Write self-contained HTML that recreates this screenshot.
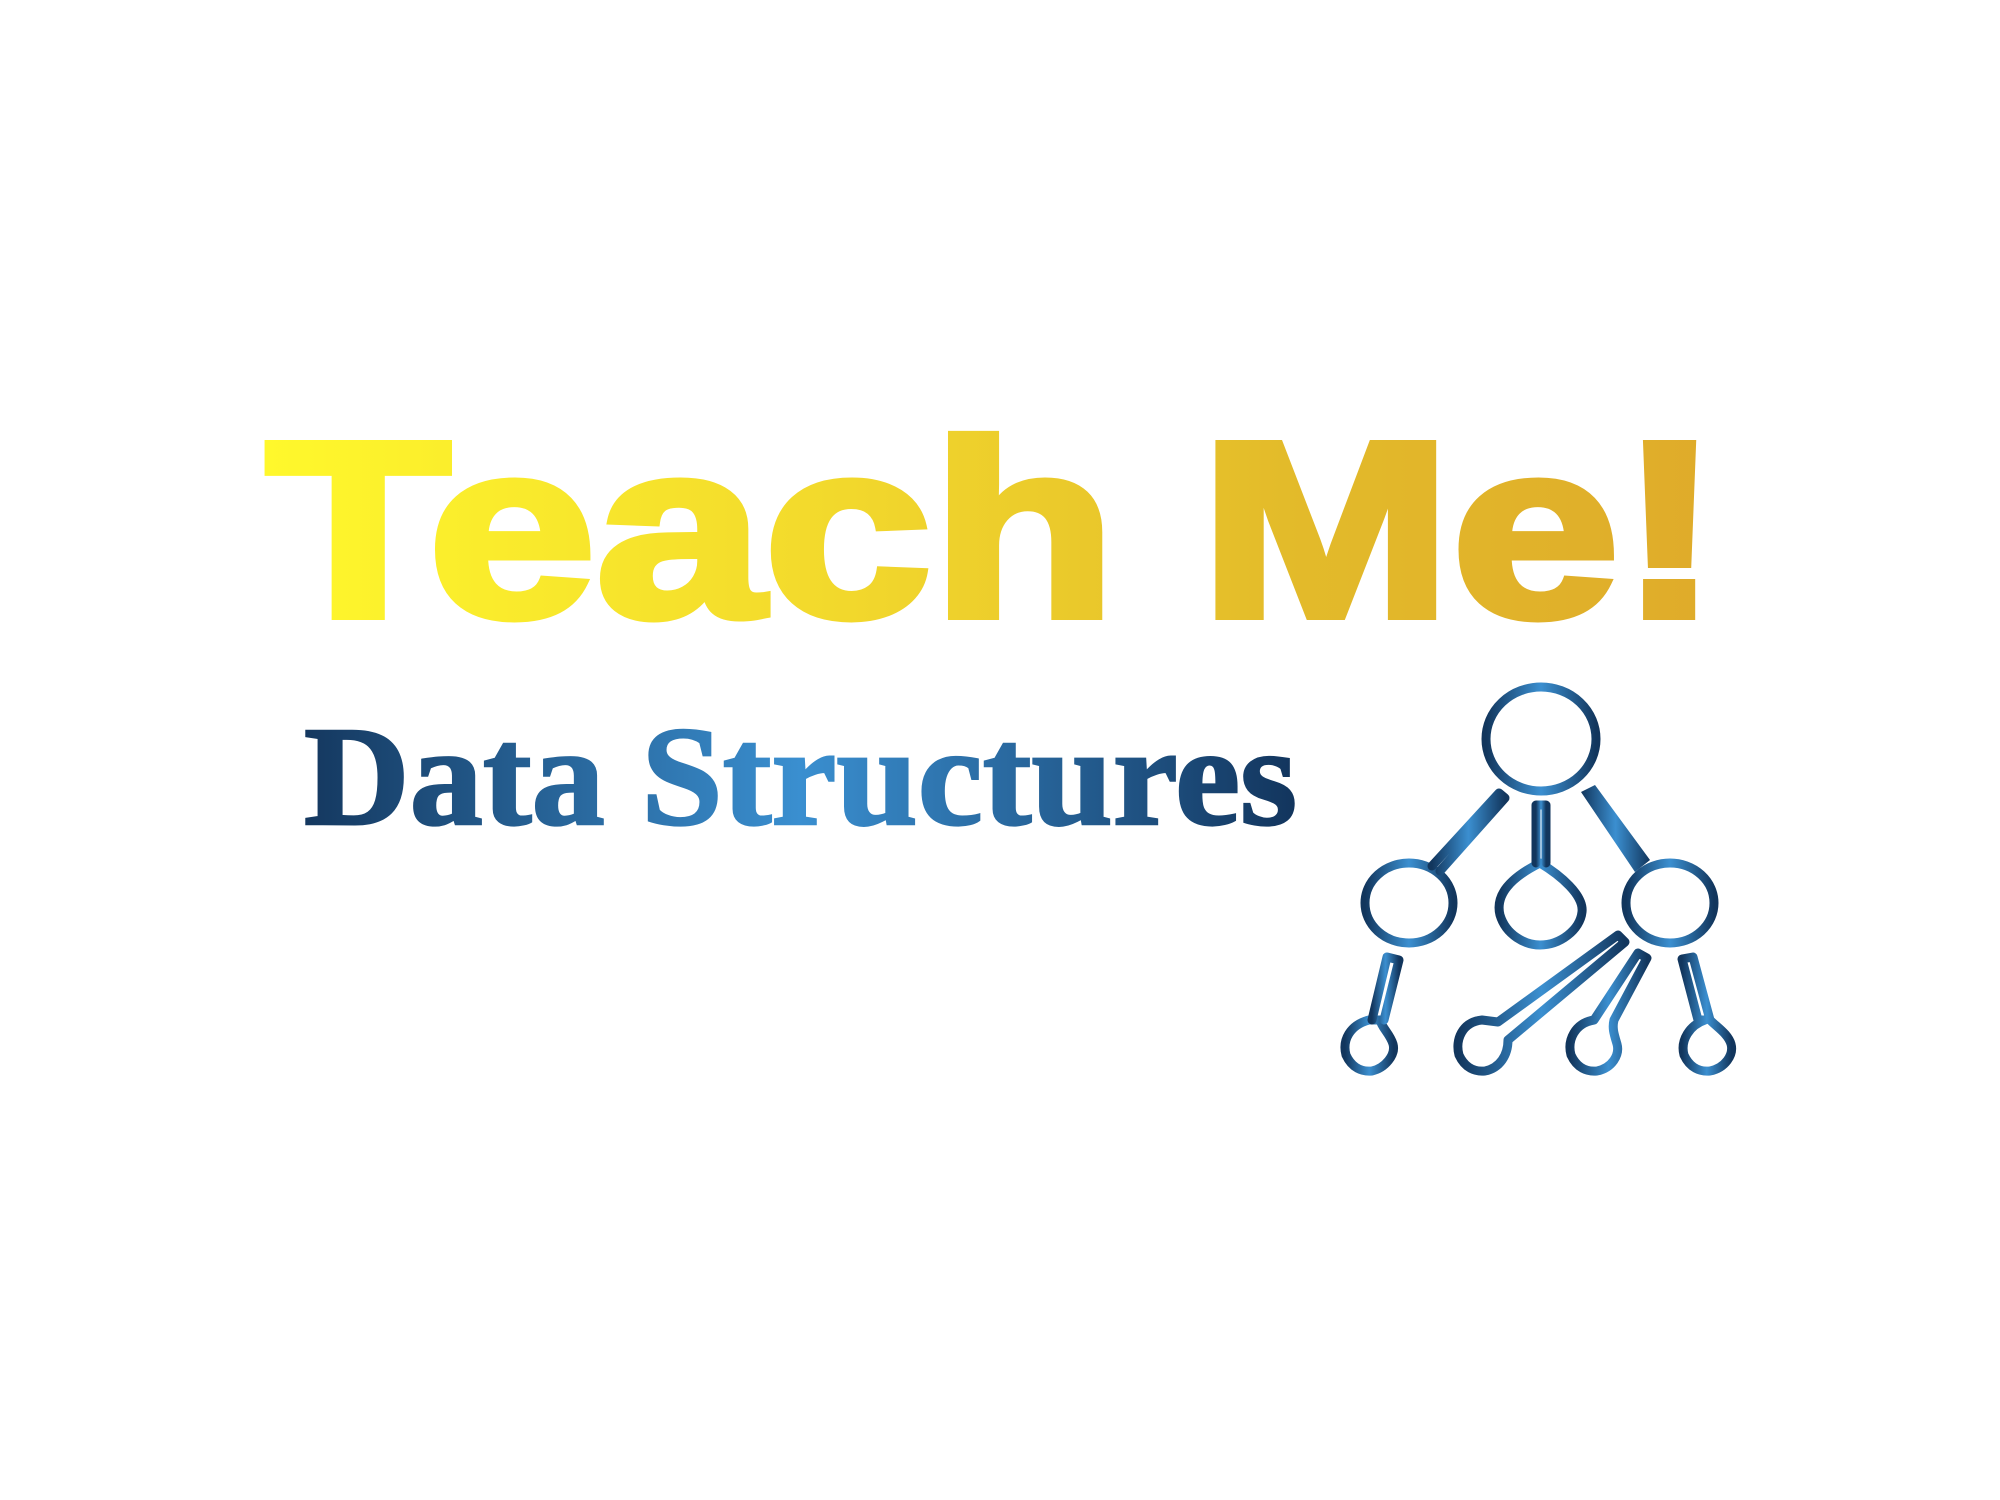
<!DOCTYPE html>
<html><head><meta charset="utf-8"><style>
html,body{margin:0;padding:0;background:#fff;width:2000px;height:1500px;overflow:hidden}
svg{display:block}
</style></head><body>
<svg width="2000" height="1500" viewBox="0 0 2000 1500" xmlns="http://www.w3.org/2000/svg">
<defs>
<linearGradient id="gy" x1="264" y1="0" x2="1722" y2="0" gradientUnits="userSpaceOnUse">
<stop offset="0" stop-color="#fff82c"/><stop offset="0.4" stop-color="#f2d82c"/><stop offset="0.7" stop-color="#e3bb2a"/><stop offset="1" stop-color="#dfab2a"/>
</linearGradient>
<linearGradient id="gb" x1="300" y1="0" x2="1300" y2="0" gradientUnits="userSpaceOnUse">
<stop offset="0" stop-color="#14375e"/><stop offset="0.5" stop-color="#3a8fd0"/><stop offset="1" stop-color="#12345c"/>
</linearGradient>
<linearGradient id="gi" x1="0" y1="0" x2="1" y2="0">
<stop offset="0" stop-color="#12365d"/><stop offset="0.5" stop-color="#3b8fd0"/><stop offset="1" stop-color="#12365d"/>
</linearGradient>
</defs>
<text x="266" y="616" font-family="Liberation Sans, sans-serif" font-weight="bold" font-size="250" fill="url(#gy)" stroke="url(#gy)" stroke-width="8" stroke-linejoin="miter" textLength="1454" lengthAdjust="spacingAndGlyphs">Teach Me!</text>
<text x="304" y="824" font-family="Liberation Serif, serif" font-weight="bold" font-size="142" fill="url(#gb)" stroke="url(#gb)" stroke-width="2.5" textLength="993" lengthAdjust="spacingAndGlyphs">Data Structures</text>
<g fill="none" stroke="url(#gi)" stroke-width="9" stroke-linecap="round" stroke-linejoin="round">
<ellipse cx="1541" cy="739" rx="55" ry="52"/>
<ellipse cx="1409" cy="903" rx="44" ry="40"/>
<path d="M1540 863 C1510 878 1495 895 1500 915 C1506 935 1525 945 1540 945 C1560 945 1580 930 1582 912 C1584 895 1560 875 1540 863 Z"/>
<ellipse cx="1670" cy="903" rx="44" ry="40"/>
<path d="M1432 866 L1499 793 L1505 798 L1440 871"/>
<path d="M1536 863 L1536 805 L1546 805 L1546 863"/>
<path d="M1369 1020 C1350 1025 1342 1040 1346 1055 C1352 1068 1362 1072 1372 1071 C1385 1068 1396 1055 1393 1044 C1390 1034 1382 1028 1380 1020 Z"/>
<path d="M1372 1020 L1387 957 L1399 960 L1384 1020"/>
<path d="M1482 1020 C1462 1022 1455 1040 1459 1055 C1465 1068 1475 1072 1485 1071 C1500 1068 1508 1055 1508 1040 L1625 942 L1618 935 L1498 1022 Z"/>
<path d="M1594 1020 C1575 1023 1567 1040 1571 1055 C1577 1068 1587 1072 1597 1071 C1612 1068 1620 1055 1617 1044 C1614 1034 1612 1028 1614 1020 L1647 958 L1638 953 Z"/>
<path d="M1705 1020 C1690 1025 1680 1040 1684 1055 C1690 1068 1700 1072 1710 1071 C1725 1068 1734 1055 1731 1044 C1728 1034 1718 1028 1710 1020 L1693 957 L1682 959 L1698 1020 Z"/>
</g>
<path d="M1581 792 L1595 785 L1650 860 L1635 872 Z" fill="url(#gi)"/>
</svg>
</body></html>
